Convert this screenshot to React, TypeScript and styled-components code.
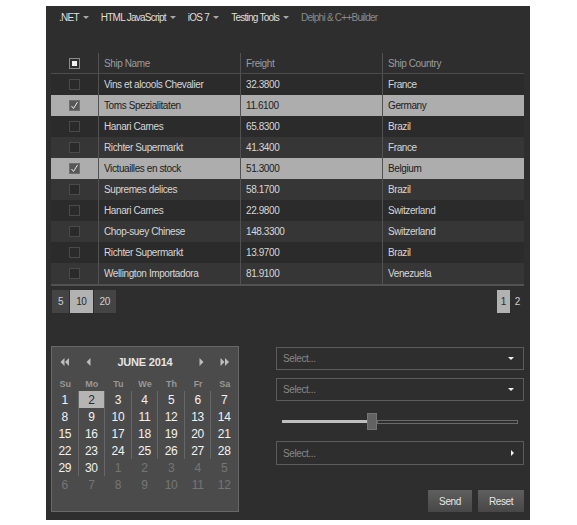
import React from "react";
import styled, { createGlobalStyle } from "styled-components";

const Global = createGlobalStyle`
  * { box-sizing: border-box; }
  html, body { margin: 0; padding: 0; background: #ffffff; }
  body { font-family: "Liberation Sans", Arial, sans-serif; }
`;

const Panel = styled.div`
  width: 484px;
  height: 514px;
  margin: 6px 0 0 46px;
  background: #2e2e2e;
  display: flex;
  flex-direction: column;
  font-size: 10px;
  letter-spacing: -0.4px;
  color: #d8d8d8;
`;

const Menu = styled.nav`
  height: 22px;
  display: flex;
  align-items: center;
  padding-left: 13px;
  gap: 12px;
  letter-spacing: -0.75px;
`;

const MenuItem = styled.span<{ $muted?: boolean }>`
  display: inline-flex;
  align-items: center;
  gap: 4px;
  color: ${(p) => (p.$muted ? "#8a8a8a" : "#dedede")};
`;

const Caret = styled.span`
  width: 0;
  height: 0;
  border-left: 3px solid transparent;
  border-right: 3px solid transparent;
  border-top: 3px solid #a8a8a8;
`;

const Table = styled.div`
  margin: 25px 0 0 5px;
  width: 473px;
  border-bottom: 2px solid #525252;
`;

const cols = "47px 142px 142px 142px";

const HeadRow = styled.div`
  display: grid;
  grid-template-columns: ${cols};
  height: 21px;
  border-bottom: 1px solid #4c4c4c;
  color: #9c9c9c;
`;

const Row = styled.div<{ $sel: boolean; $alt: boolean }>`
  display: grid;
  grid-template-columns: ${cols};
  height: 21px;
  background: ${(p) => (p.$sel ? "#adadad" : p.$alt ? "#363636" : "#2b2b2b")};
  color: ${(p) => (p.$sel ? "#202020" : "#d6d6d6")};
`;

const Cell = styled.div`
  display: flex;
  align-items: center;
  padding-left: 5px;
  border-left: 1px solid #525252;
  white-space: nowrap;
  overflow: hidden;
  &:first-child {
    border-left: none;
    justify-content: center;
    padding-left: 0;
  }
`;

const Box = styled.span<{ $checked?: boolean }>`
  width: 11px;
  height: 11px;
  border: 1px solid ${(p) => (p.$checked ? "#6e6e6e" : "#4a4a4a")};
  background: ${(p) => (p.$checked ? "#575757" : "#2a2a2a")};
  display: flex;
  align-items: center;
  justify-content: center;
`;

const HeadBox = styled.span`
  width: 11px;
  height: 11px;
  border: 1px solid #8a8a8a;
  background: #2e2e2e;
  display: flex;
  align-items: center;
  justify-content: center;
  &::after {
    content: "";
    width: 5px;
    height: 5px;
    background: #f0f0f0;
  }
`;

const Pager = styled.div`
  display: flex;
  justify-content: space-between;
  margin: 4px 0 0 6px;
  width: 472px;
`;

const PageGroup = styled.div`
  display: flex;
  gap: 1px;
`;

const PageBtn = styled.span<{ $active?: boolean; $plain?: boolean; $pad: number }>`
  height: 23px;
  padding: 0 ${(p) => p.$pad}px;
  display: flex;
  align-items: center;
  background: ${(p) => (p.$active ? "#b2b2b2" : p.$plain ? "transparent" : "#444444")};
  color: ${(p) => (p.$active ? "#2a2a2a" : "#cfcfcf")};
`;

const Bottom = styled.div`
  display: grid;
  grid-template-columns: 188px 248px;
  column-gap: 37px;
  margin: 33px 0 0 5px;
  align-items: start;
`;

const Calendar = styled.div`
  height: 166px;
  background: #4b4b4b;
  border: 1px solid #686868;
`;

const CalHeader = styled.div`
  height: 30px;
  display: flex;
  align-items: center;
  padding: 0 8px;
`;

const NavGroup = styled.div`
  display: flex;
  align-items: center;
  gap: 16px;
`;

const Title = styled.div`
  flex: 1;
  text-align: center;
  font-weight: bold;
  font-size: 11px;
  letter-spacing: -0.2px;
  color: #e4e4e4;
`;

const DayNames = styled.div`
  display: grid;
  grid-template-columns: repeat(7, 1fr);
  height: 14px;
  align-items: center;
  text-align: center;
  font-size: 9px;
  font-weight: bold;
  letter-spacing: 0;
  color: #989898;
`;

const Days = styled.div`
  display: grid;
  grid-template-columns: repeat(7, 1fr);
  grid-auto-rows: 17px;
`;

const Day = styled.div<{ $other: boolean; $sel: boolean; $sep: boolean }>`
  display: flex;
  align-items: center;
  justify-content: center;
  font-size: 12px;
  letter-spacing: -0.3px;
  color: ${(p) => (p.$sel ? "#2a2a2a" : p.$other ? "#767676" : "#f2f2f2")};
  background: ${(p) => (p.$sel ? "#b4b4b4" : "transparent")};
  border-right: 1px solid ${(p) => (p.$sep ? "#676767" : "transparent")};
`;

const Side = styled.div`
  display: flex;
  flex-direction: column;
  padding-top: 1px;
`;

const Select = styled.div<{ $mt: number; $h: number }>`
  height: ${(p) => p.$h}px;
  margin-top: ${(p) => p.$mt}px;
  border: 1px solid #5c5c5c;
  display: flex;
  align-items: center;
  justify-content: space-between;
  padding: 0 9px 0 6px;
  color: #878787;
`;

const DownTri = styled.span`
  width: 0;
  height: 0;
  border-left: 3px solid transparent;
  border-right: 3px solid transparent;
  border-top: 3px solid #f0f0f0;
`;

const RightTri = styled.span`
  width: 0;
  height: 0;
  border-top: 3px solid transparent;
  border-bottom: 3px solid transparent;
  border-left: 3px solid #f0f0f0;
`;

const Slider = styled.div`
  margin: 12px 6px 0 6px;
  height: 17px;
  display: flex;
  align-items: center;
`;

const Fill = styled.div`
  height: 3px;
  background: #bfbfbf;
`;

const Thumb = styled.div`
  width: 10px;
  height: 17px;
  background: #626262;
  border: 1px solid #747474;
`;

const Rest = styled.div`
  flex: 1;
  height: 4px;
  border: 1px solid #6a6a6a;
  background: #2e2e2e;
`;

const Actions = styled.div`
  display: flex;
  justify-content: flex-end;
  gap: 6px;
  margin-top: 25px;
`;

const Button = styled.button<{ $w: number }>`
  width: ${(p) => p.$w}px;
  height: 22px;
  border: none;
  padding: 0;
  background: linear-gradient(#5f5f5f, #474747);
  color: #e6e6e6;
  font-family: "Liberation Sans", Arial, sans-serif;
  font-size: 10px;
  letter-spacing: -0.4px;
`;

const rows = [
  ["Vins et alcools Chevalier", "32.3800", "France", false],
  ["Toms Spezialitaten", "11.6100", "Germany", true],
  ["Hanari Carnes", "65.8300", "Brazil", false],
  ["Richter Supermarkt", "41.3400", "France", false],
  ["Victuailles en stock", "51.3000", "Belgium", true],
  ["Supremes delices", "58.1700", "Brazil", false],
  ["Hanari Carnes", "22.9800", "Switzerland", false],
  ["Chop-suey Chinese", "148.3300", "Switzerland", false],
  ["Richter Supermarkt", "13.9700", "Brazil", false],
  ["Wellington Importadora", "81.9100", "Venezuela", false],
] as const;

const Check = () => (
  <svg width="9" height="9" viewBox="0 0 9 9">
    <path d="M1.5 5 L3.5 7.5 L7.5 1" fill="none" stroke="#e8e8e8" strokeWidth="1" />
  </svg>
);

const Arrow = ({ dir, double }: { dir: "l" | "r"; double?: boolean }) => {
  const tri = (x: number) =>
    dir === "l" ? `M${x + 4} 0 L${x} 4 L${x + 4} 8 Z` : `M${x} 0 L${x + 4} 4 L${x} 8 Z`;
  return (
    <svg width={double ? 10 : 5} height="8" viewBox={`0 0 ${double ? 10 : 5} 8`}>
      <path d={tri(0.5)} fill="#bdbdbd" />
      {double && <path d={tri(5)} fill="#bdbdbd" />}
    </svg>
  );
};

type D = { n: number; other: boolean };
const buildDays = (): D[] => {
  const out: D[] = [];
  for (let i = 1; i <= 30; i++) out.push({ n: i, other: false });
  for (let i = 1; i <= 12; i++) out.push({ n: i, other: true });
  return out;
};

export default function App() {
  const days = buildDays();
  const sliderValue = 0.36;
  return (
    <>
      <Global />
      <Panel>
        <Menu>
          <MenuItem>.NET <Caret /></MenuItem>
          <MenuItem>HTML JavaScript <Caret /></MenuItem>
          <MenuItem>iOS 7 <Caret /></MenuItem>
          <MenuItem>Testing Tools <Caret /></MenuItem>
          <MenuItem $muted>Delphi &amp; C++Builder</MenuItem>
        </Menu>

        <Table>
          <HeadRow>
            <Cell><HeadBox /></Cell>
            <Cell>Ship Name</Cell>
            <Cell>Freight</Cell>
            <Cell>Ship Country</Cell>
          </HeadRow>
          {rows.map(([name, freight, country, sel], i) => (
            <Row key={i} $sel={sel} $alt={i % 2 === 1}>
              <Cell><Box $checked={sel}>{sel && <Check />}</Box></Cell>
              <Cell>{name}</Cell>
              <Cell>{freight}</Cell>
              <Cell>{country}</Cell>
            </Row>
          ))}
        </Table>

        <Pager>
          <PageGroup>
            <PageBtn $pad={6}>5</PageBtn>
            <PageBtn $pad={6} $active>10</PageBtn>
            <PageBtn $pad={6}>20</PageBtn>
          </PageGroup>
          <PageGroup>
            <PageBtn $pad={4} $active>1</PageBtn>
            <PageBtn $pad={4} $plain>2</PageBtn>
          </PageGroup>
        </Pager>

        <Bottom>
          <Calendar>
            <CalHeader>
              <NavGroup>
                <Arrow dir="l" double />
                <Arrow dir="l" />
              </NavGroup>
              <Title>JUNE 2014</Title>
              <NavGroup>
                <Arrow dir="r" />
                <Arrow dir="r" double />
              </NavGroup>
            </CalHeader>
            <DayNames>
              {["Su", "Mo", "Tu", "We", "Th", "Fr", "Sa"].map((d) => (
                <span key={d}>{d}</span>
              ))}
            </DayNames>
            <Days>
              {days.map((d, i) => (
                <Day
                  key={i}
                  $other={d.other}
                  $sel={!d.other && d.n === 2}
                  $sep={!d.other && i % 7 !== 6}
                >
                  {d.n}
                </Day>
              ))}
            </Days>
          </Calendar>

          <Side>
            <Select $mt={0} $h={23}>
              <span>Select...</span>
              <DownTri />
            </Select>
            <Select $mt={8} $h={23}>
              <span>Select...</span>
              <DownTri />
            </Select>
            <Slider>
              <Fill style={{ width: `${sliderValue * 100}%` }} />
              <Thumb />
              <Rest />
            </Slider>
            <Select $mt={11} $h={24}>
              <span>Select...</span>
              <RightTri />
            </Select>
            <Actions>
              <Button $w={44}>Send</Button>
              <Button $w={46}>Reset</Button>
            </Actions>
          </Side>
        </Bottom>
      </Panel>
    </>
  );
}
